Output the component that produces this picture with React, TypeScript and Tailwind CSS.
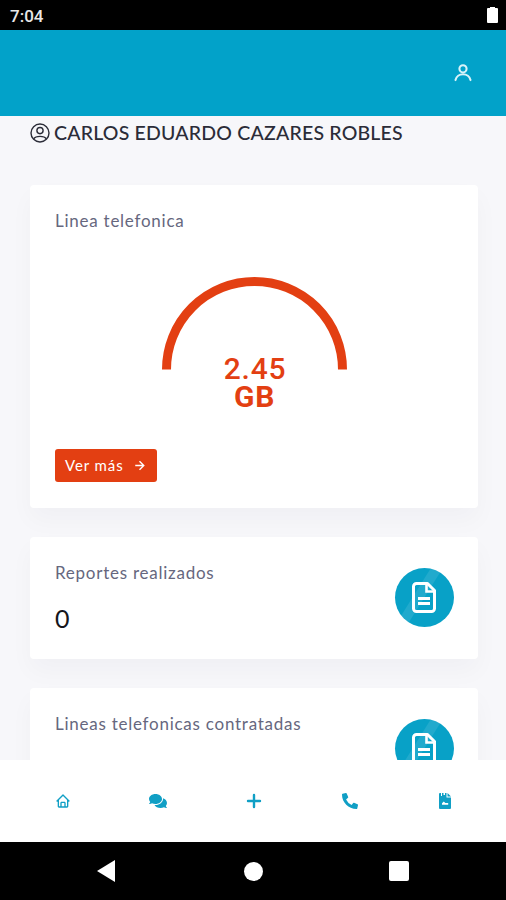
import type { ReactNode } from 'react'
import { BiHome, BiRightArrowAlt } from 'react-icons/bi'
import { FaComments, FaPhoneAlt } from 'react-icons/fa'

type IconProps = { size: number }

function UserIcon({ size }: IconProps) {
  return (
    <svg width={size} height={size} viewBox="0 0 24 24" fill="none" stroke="currentColor" strokeWidth="2.5" strokeLinecap="round">
      <circle cx="12" cy="7" r="4.3" />
      <path d="M3 20.500a9.200 8.800 0 0 1 18 0" />
    </svg>
  )
}

function UserCircleIcon({ size }: IconProps) {
  return (
    <svg width={size} height={size} viewBox="0 0 20 20" fill="none" stroke="currentColor" strokeWidth="1.4">
      <circle cx="10" cy="10" r="9" />
      <circle cx="10" cy="7.6" r="3.1" />
      <path d="M3.800 15.800c1-1.700 3.200-2.400 6.200-2.400s5.200.7 6.200 2.400" />
    </svg>
  )
}

function PlusIcon({ size }: IconProps) {
  return (
    <svg width={size} height={size} viewBox="0 0 16 16" stroke="currentColor" strokeWidth="2.4" strokeLinecap="round">
      <path d="M8 2v12M2 8h12" />
    </svg>
  )
}

function FileImageIcon({ size }: IconProps) {
  return (
    <svg width={size * 0.75} height={size} viewBox="0 0 12 16" fill="currentColor">
      <path d="M1 0h1v3h1V0h1.500v2H6V0h1.500v4.500H12V15a1 1 0 0 1-1 1H1a1 1 0 0 1-1-1V1a1 1 0 0 1 1-1z" />
      <path d="M8.500 0 12 3.500H8.500z" />
      <path d="M3 11.800v-1.600l1.800-1.700 1.500 1.400h2.900v1.900z" fill="#fff" />
    </svg>
  )
}

function FileIcon() {
  return (
    <svg width="24" height="31" viewBox="0 0 24 31" fill="none" stroke="currentColor" strokeWidth="3" className="relative -left-px">
      <path d="M15.500 1.500H4.500a3 3 0 0 0-3 3v22a3 3 0 0 0 3 3h15a3 3 0 0 0 3-3V8.500z" strokeLinejoin="round" />
      <path d="M14.500 2v7.500H22" strokeWidth="2.600" />
      <path d="M6 16.500h12M6 21.500h12" />
    </svg>
  )
}

const navItems = [
  { name: 'Inicio', icon: BiHome, size: 16 },
  { name: 'Mensajes', icon: FaComments, size: 18 },
  { name: 'Agregar', icon: PlusIcon, size: 16 },
  { name: 'Llamar', icon: FaPhoneAlt, size: 16 },
  { name: 'Documentos', icon: FileImageIcon, size: 16 },
]

function StatusBar() {
  return (
    <div className="flex h-[30px] shrink-0 items-center justify-between bg-black pr-2 pl-[10px] text-white">
      <span className="pt-[2px] font-[Roboto,sans-serif] text-[17px] leading-none font-medium text-[#e8e8e8]">7:04</span>
      <svg width="11" height="18" viewBox="0 0 11 18" fill="currentColor">
        <path d="M3 1h5v1h2a1 1 0 0 1 1 1v13a1 1 0 0 1-1 1H1a1 1 0 0 1-1-1V3a1 1 0 0 1 1-1h2z" />
      </svg>
    </div>
  )
}

function Card({ className, children }: { className: string; children: ReactNode }) {
  return (
    <section className={`shrink-0 rounded bg-white shadow-[0_12px_24px_rgba(18,38,63,0.03)] ${className}`}>
      {children}
    </section>
  )
}

function CardTitle({ children }: { children: ReactNode }) {
  return (
    <p className="text-[17px] leading-5 tracking-[0.75px] whitespace-nowrap text-[#66677e]">{children}</p>
  )
}

function StatIcon() {
  return (
    <div className="relative mt-[31px] flex size-[59px] shrink-0 items-center justify-center overflow-hidden rounded-full bg-[#08a1c7] text-white">
      {/* brillo diagonal */}
      <div className="absolute -top-[6px] left-[20px] h-[66px] w-[10px] rotate-[32deg] bg-white/10" />
      <FileIcon />
    </div>
  )
}

function StatCard({ title, value }: { title: string; value?: string }) {
  return (
    <Card className="flex h-[122px] justify-between pr-6 pl-[25px]">
      <div className="pt-[26px]">
        <CardTitle>{title}</CardTitle>
        {value && <p className="mt-[20px] text-[25px] leading-[30px] text-[#15161b]">{value}</p>}
      </div>
      <StatIcon />
    </Card>
  )
}

function Gauge() {
  return (
    <div className="mx-auto mt-[46px] flex h-[139px] w-[200px] flex-col items-center text-[#e33f12]">
      <svg width="200" height="93" viewBox="0 0 200 93" className="shrink-0">
        <path d="M12.500 92.500a88 88 0 0 1 176 0" fill="none" stroke="currentColor" strokeWidth="9" />
      </svg>
      <div className="-mt-[15px] flex flex-col items-center font-[Roboto,sans-serif] text-[30px] leading-[28px]">
        <span className="pl-[2px] font-medium tracking-[0.8px]">2.45</span>
        <span className="pl-[1px] font-bold tracking-[0.8px]">GB</span>
      </div>
    </div>
  )
}

export default function App() {
  return (
    <div className="flex h-[900px] w-[506px] flex-col overflow-hidden bg-[#f7f7fa] font-[Lato,'Open_Sans',sans-serif]">
      <StatusBar />
      <header className="flex h-[86px] shrink-0 items-center justify-end bg-[#02a2c9] pr-[33px] text-[#d9f3f9]">
        <UserIcon size={20} />
      </header>

      <main className="flex h-[644px] shrink-0 flex-col overflow-hidden pr-7 pl-[30px]">
        <h1 className="flex h-[34px] shrink-0 items-center gap-1 text-[19.5px] font-medium tracking-[0.2px] whitespace-nowrap text-[#2b2c38]">
          <UserCircleIcon size={20} />
          CARLOS EDUARDO CAZARES ROBLES
        </h1>

        <div className="mt-[35px] flex flex-col gap-[29px]">
          <Card className="h-[323px] px-[25px] pt-[26px]">
            <CardTitle>Linea telefonica</CardTitle>
            <Gauge />
            <button className="mt-[33px] flex h-[33px] w-[102px] items-center justify-between rounded-[3px] bg-[#e33f12] pr-[9px] pl-[10px] text-[15px] tracking-[0.9px] whitespace-nowrap text-white">
              Ver más
              <BiRightArrowAlt size={17} />
            </button>
          </Card>
          <StatCard title="Reportes realizados" value="0" />
          <StatCard title="Lineas telefonicas contratadas" />
        </div>
      </main>

      <nav className="flex h-[82px] shrink-0 items-center bg-white pr-[13px] pl-[15px] text-[#109fc5]">
        {navItems.map(({ name, icon: Icon, size }) => (
          <button key={name} aria-label={name} className="flex flex-1 justify-center">
            <Icon size={size} />
          </button>
        ))}
      </nav>

      <div className="flex h-[58px] shrink-0 items-center justify-between bg-black pr-[97px] pl-[97px] text-white">
        <svg width="18" height="22" viewBox="0 0 18 22" fill="currentColor">
          <path d="M18 0v22L0 11z" />
        </svg>
        <div className="ml-[2px] size-[19px] rounded-full bg-white" />
        <div className="size-5 rounded-[2px] bg-white" />
      </div>
    </div>
  )
}
